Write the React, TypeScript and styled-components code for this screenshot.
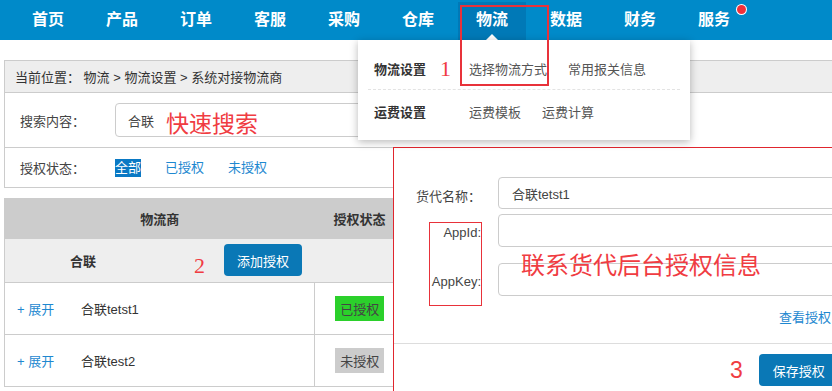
import React from 'react';
import styled, { createGlobalStyle } from 'styled-components';

const navItems = ['首页', '产品', '订单', '客服', '采购', '仓库', '物流', '数据', '财务', '服务'];

const GlobalStyle = createGlobalStyle`
  html, body { margin: 0; padding: 0; background: #fff; overflow: hidden; }
  body {
    font-family: "Liberation Sans", "Noto Sans CJK SC", sans-serif;
    font-size: 13px;
    color: #333;
  }
  * { box-sizing: border-box; }
`;

const Page = styled.div`
  position: relative;
  width: 832px;
  height: 391px;
  overflow: hidden;
`;

const NavBar = styled.div`
  position: relative;
  z-index: 5;
  height: 40px;
  display: flex;
  padding-left: 14px;
  background: #008ac9;
`;

const NavItem = styled.div<{ $active?: boolean; $dot?: boolean }>`
  position: relative;
  width: 68px;
  margin: 2px 6px 0 0;
  padding-bottom: 2px;
  display: flex;
  align-items: center;
  justify-content: center;
  color: #fff;
  font-size: 16px;
  font-weight: bold;
  line-height: 20px;
  background: ${p => (p.$active ? '#0079b7' : 'transparent')};

  &::before {
    content: '';
    display: ${p => (p.$active ? 'block' : 'none')};
    position: absolute;
    bottom: 0;
    left: 50%;
    margin-left: -6px;
    border: 6px solid transparent;
    border-top: 0;
    border-bottom-color: #fff;
  }

  &::after {
    content: '';
    display: ${p => (p.$dot ? 'block' : 'none')};
    position: absolute;
    top: 3px;
    right: 2px;
    width: 9px;
    height: 9px;
    border-radius: 50%;
    background: #f0303a;
    box-shadow: 0 0 0 1px #fff;
  }
`;

const Dropdown = styled.div`
  position: absolute;
  z-index: 6;
  left: 358px;
  top: 40px;
  width: 332px;
  height: 100px;
  padding: 8px 10px 0;
  background: #fff;
  box-shadow: 0 2px 8px rgba(0, 0, 0, 0.28);
`;

const MenuRow = styled.div<{ $divided?: boolean }>`
  height: 42px;
  display: flex;
  align-items: center;
  padding-left: 6px;
  border-bottom: ${p => (p.$divided ? '1px dashed #e3e3e3' : 'none')};
`;

const MenuTitle = styled.div`
  width: 95px;
  font-weight: bold;
  color: #333;
`;

const MenuLinks = styled.div`
  display: flex;
  gap: 21px;
  color: #555;
`;

const Content = styled.div`
  width: 1000px;
  padding: 20px 0 0 4px;
`;

const Breadcrumb = styled.div`
  height: 33px;
  display: flex;
  align-items: center;
  padding-left: 10px;
  border: 1px solid #ccc;
  background: #eee;
  color: #333;
  white-space: pre;
`;

const FilterPanel = styled.div`
  border: 1px solid #ccc;
  border-top: none;
`;

const FilterRow = styled.div<{ $h: number; $divided?: boolean }>`
  height: ${p => p.$h}px;
  display: flex;
  align-items: center;
  padding-left: 15px;
  border-bottom: ${p => (p.$divided ? '1px solid #ccc' : 'none')};
`;

const FilterLabel = styled.div`
  width: 95px;
  color: #444;
`;

const SearchInput = styled.input`
  width: 400px;
  height: 34px;
  padding: 0 12px;
  border: 1px solid #ccc;
  border-radius: 4px;
  font: inherit;
  color: #444;
  outline: none;
`;

const StatusTabs = styled.div`
  display: flex;
  gap: 24px;
`;

const StatusTab = styled.span<{ $selected?: boolean }>`
  line-height: 18px;
  color: ${p => (p.$selected ? '#fff' : '#1e88d0')};
  background: ${p => (p.$selected ? '#0a79c4' : 'transparent')};
`;

const Table = styled.table`
  width: 400px;
  margin-top: 10px;
  border-collapse: collapse;
  border-left: 1px solid #ccc;
  table-layout: fixed;
`;

const HeadCell = styled.th<{ $w: number }>`
  width: ${p => p.$w}px;
  height: 41px;
  padding: 0;
  background: #ccc;
  color: #333;
  font-weight: bold;
  text-align: center;
`;

const GroupCell = styled.td`
  height: 43px;
  padding: 0;
  background: #eee;
  border-bottom: 1px solid #ccc;
`;

const GroupInner = styled.div`
  display: flex;
  align-items: center;
`;

const GroupName = styled.div`
  width: 156px;
  text-align: center;
  font-weight: bold;
  color: #333;
`;

const BlueButton = styled.button<{ $w: number }>`
  width: ${p => p.$w}px;
  height: 32px;
  padding: 0 0 0 14px;
  border: none;
  border-radius: 4px;
  background: #0a78b6;
  color: #fff;
  font: inherit;
  text-align: left;
`;

const AddButton = styled(BlueButton)`
  margin-left: 63px;
  padding: 0;
  text-align: center;
`;

const Cell = styled.td<{ $divided?: boolean }>`
  height: 52px;
  padding: 0;
  border-bottom: 1px solid #ccc;
  border-right: ${p => (p.$divided ? '1px solid #ccc' : 'none')};
`;

const RowInner = styled.div`
  display: flex;
  align-items: center;
  padding-left: 12px;
`;

const Toggle = styled.span`
  width: 64px;
  color: #1e88d0;
`;

const BadgeWrap = styled.div`
  display: flex;
  justify-content: center;
`;

const Badge = styled.span<{ $ok?: boolean }>`
  width: 49px;
  height: 25px;
  display: flex;
  align-items: center;
  justify-content: center;
  background: ${p => (p.$ok ? '#2bd02b' : '#ccc')};
  color: #444;
`;

const Modal = styled.div`
  position: absolute;
  z-index: 4;
  left: 393px;
  top: 147px;
  width: 480px;
  height: 260px;
  padding-top: 29px;
  background: #fff;
  border-top: 1px solid #e0262e;
  border-left: 1px solid #e0262e;
`;

const FormRow = styled.div<{ $gap: number }>`
  display: flex;
  align-items: center;
  margin-bottom: ${p => p.$gap}px;
`;

const FormLabel = styled.div`
  width: 87px;
  margin-right: 17px;
  text-align: right;
  color: #444;
  padding-top: 4px;
`;

const FormInput = styled.input<{ $h: number }>`
  width: 360px;
  height: ${p => p.$h}px;
  padding: 0 13px;
  border: 1px solid #ccc;
  border-radius: 4px;
  font: inherit;
  color: #444;
  outline: none;
`;

const HelpLink = styled.div`
  margin-top: 12px;
  padding-left: 385px;
  line-height: 20px;
  color: #1e88d0;
  white-space: nowrap;
`;

const ModalFooter = styled.div`
  margin-top: 15px;
  padding: 10px 0 0 336px;
  border-top: 1px solid #ddd;
  display: flex;
  align-items: center;
  gap: 16px;
`;

const StepNumber = styled.span`
  font-size: 23px;
  line-height: 1;
  color: #f03c42;
`;

const MarkBox = styled.div<{ $x: number; $y: number; $w: number; $h: number; $b: number }>`
  position: absolute;
  z-index: 10;
  left: ${p => p.$x}px;
  top: ${p => p.$y}px;
  width: ${p => p.$w}px;
  height: ${p => p.$h}px;
  border: ${p => p.$b}px solid #e8323a;
`;

const MarkText = styled.div<{ $x: number; $y: number; $size: number; $serif?: boolean }>`
  position: absolute;
  z-index: 10;
  left: ${p => p.$x}px;
  top: ${p => p.$y}px;
  font-size: ${p => p.$size}px;
  line-height: 1;
  color: #f03c42;
  white-space: nowrap;
  font-family: ${p => (p.$serif ? '"Liberation Serif", serif' : '"Liberation Sans", "Noto Sans CJK SC", sans-serif')};
`;

export default function App() {
  return (
    <Page>
      <GlobalStyle />
      <NavBar>
        {navItems.map(n => (
          <NavItem key={n} $active={n === '物流'} $dot={n === '服务'}>
            {n}
          </NavItem>
        ))}
      </NavBar>

      <Dropdown>
        <MenuRow $divided>
          <MenuTitle>物流设置</MenuTitle>
          <MenuLinks>
            <span>选择物流方式</span>
            <span>常用报关信息</span>
          </MenuLinks>
        </MenuRow>
        <MenuRow>
          <MenuTitle>运费设置</MenuTitle>
          <MenuLinks>
            <span>运费模板</span>
            <span>运费计算</span>
          </MenuLinks>
        </MenuRow>
      </Dropdown>

      <Content>
        <Breadcrumb>当前位置： 物流 &gt; 物流设置 &gt; 系统对接物流商</Breadcrumb>
        <FilterPanel>
          <FilterRow $h={55} $divided>
            <FilterLabel>搜索内容：</FilterLabel>
            <SearchInput defaultValue="合联" readOnly />
          </FilterRow>
          <FilterRow $h={39}>
            <FilterLabel>授权状态：</FilterLabel>
            <StatusTabs>
              <StatusTab $selected>全部</StatusTab>
              <StatusTab>已授权</StatusTab>
              <StatusTab>未授权</StatusTab>
            </StatusTabs>
          </FilterRow>
        </FilterPanel>

        <Table>
          <thead>
            <tr>
              <HeadCell $w={310}>物流商</HeadCell>
              <HeadCell $w={90}>授权状态</HeadCell>
            </tr>
          </thead>
          <tbody>
            <tr>
              <GroupCell colSpan={2}>
                <GroupInner>
                  <GroupName>合联</GroupName>
                  <AddButton $w={78}>添加授权</AddButton>
                </GroupInner>
              </GroupCell>
            </tr>
            <tr>
              <Cell $divided>
                <RowInner>
                  <Toggle>+ 展开</Toggle>
                  <span>合联tetst1</span>
                </RowInner>
              </Cell>
              <Cell>
                <BadgeWrap>
                  <Badge $ok>已授权</Badge>
                </BadgeWrap>
              </Cell>
            </tr>
            <tr>
              <Cell $divided>
                <RowInner>
                  <Toggle>+ 展开</Toggle>
                  <span>合联test2</span>
                </RowInner>
              </Cell>
              <Cell>
                <BadgeWrap>
                  <Badge>未授权</Badge>
                </BadgeWrap>
              </Cell>
            </tr>
          </tbody>
        </Table>
      </Content>

      <Modal>
        <FormRow $gap={5}>
          <FormLabel>货代名称：</FormLabel>
          <FormInput $h={32} defaultValue="合联tetst1" readOnly />
        </FormRow>
        <FormRow $gap={16}>
          <FormLabel>AppId:</FormLabel>
          <FormInput $h={33} readOnly />
        </FormRow>
        <FormRow $gap={0}>
          <FormLabel>AppKey:</FormLabel>
          <FormInput $h={33} readOnly />
        </FormRow>
        <HelpLink>查看授权</HelpLink>
        <ModalFooter>
          <StepNumber>3</StepNumber>
          <BlueButton $w={80}>保存授权</BlueButton>
        </ModalFooter>
      </Modal>

      <MarkBox $x={460} $y={5} $w={89} $h={81} $b={2} />
      <MarkBox $x={429} $y={222} $w={53} $h={84} $b={1} />
      <MarkText $x={440} $y={58} $size={22} $serif>1</MarkText>
      <MarkText $x={194} $y={255} $size={22} $serif>2</MarkText>
      <MarkText $x={166} $y={113} $size={23}>快速搜索</MarkText>
      <MarkText $x={521} $y={254} $size={24}>联系货代后台授权信息</MarkText>
    </Page>
  );
}
